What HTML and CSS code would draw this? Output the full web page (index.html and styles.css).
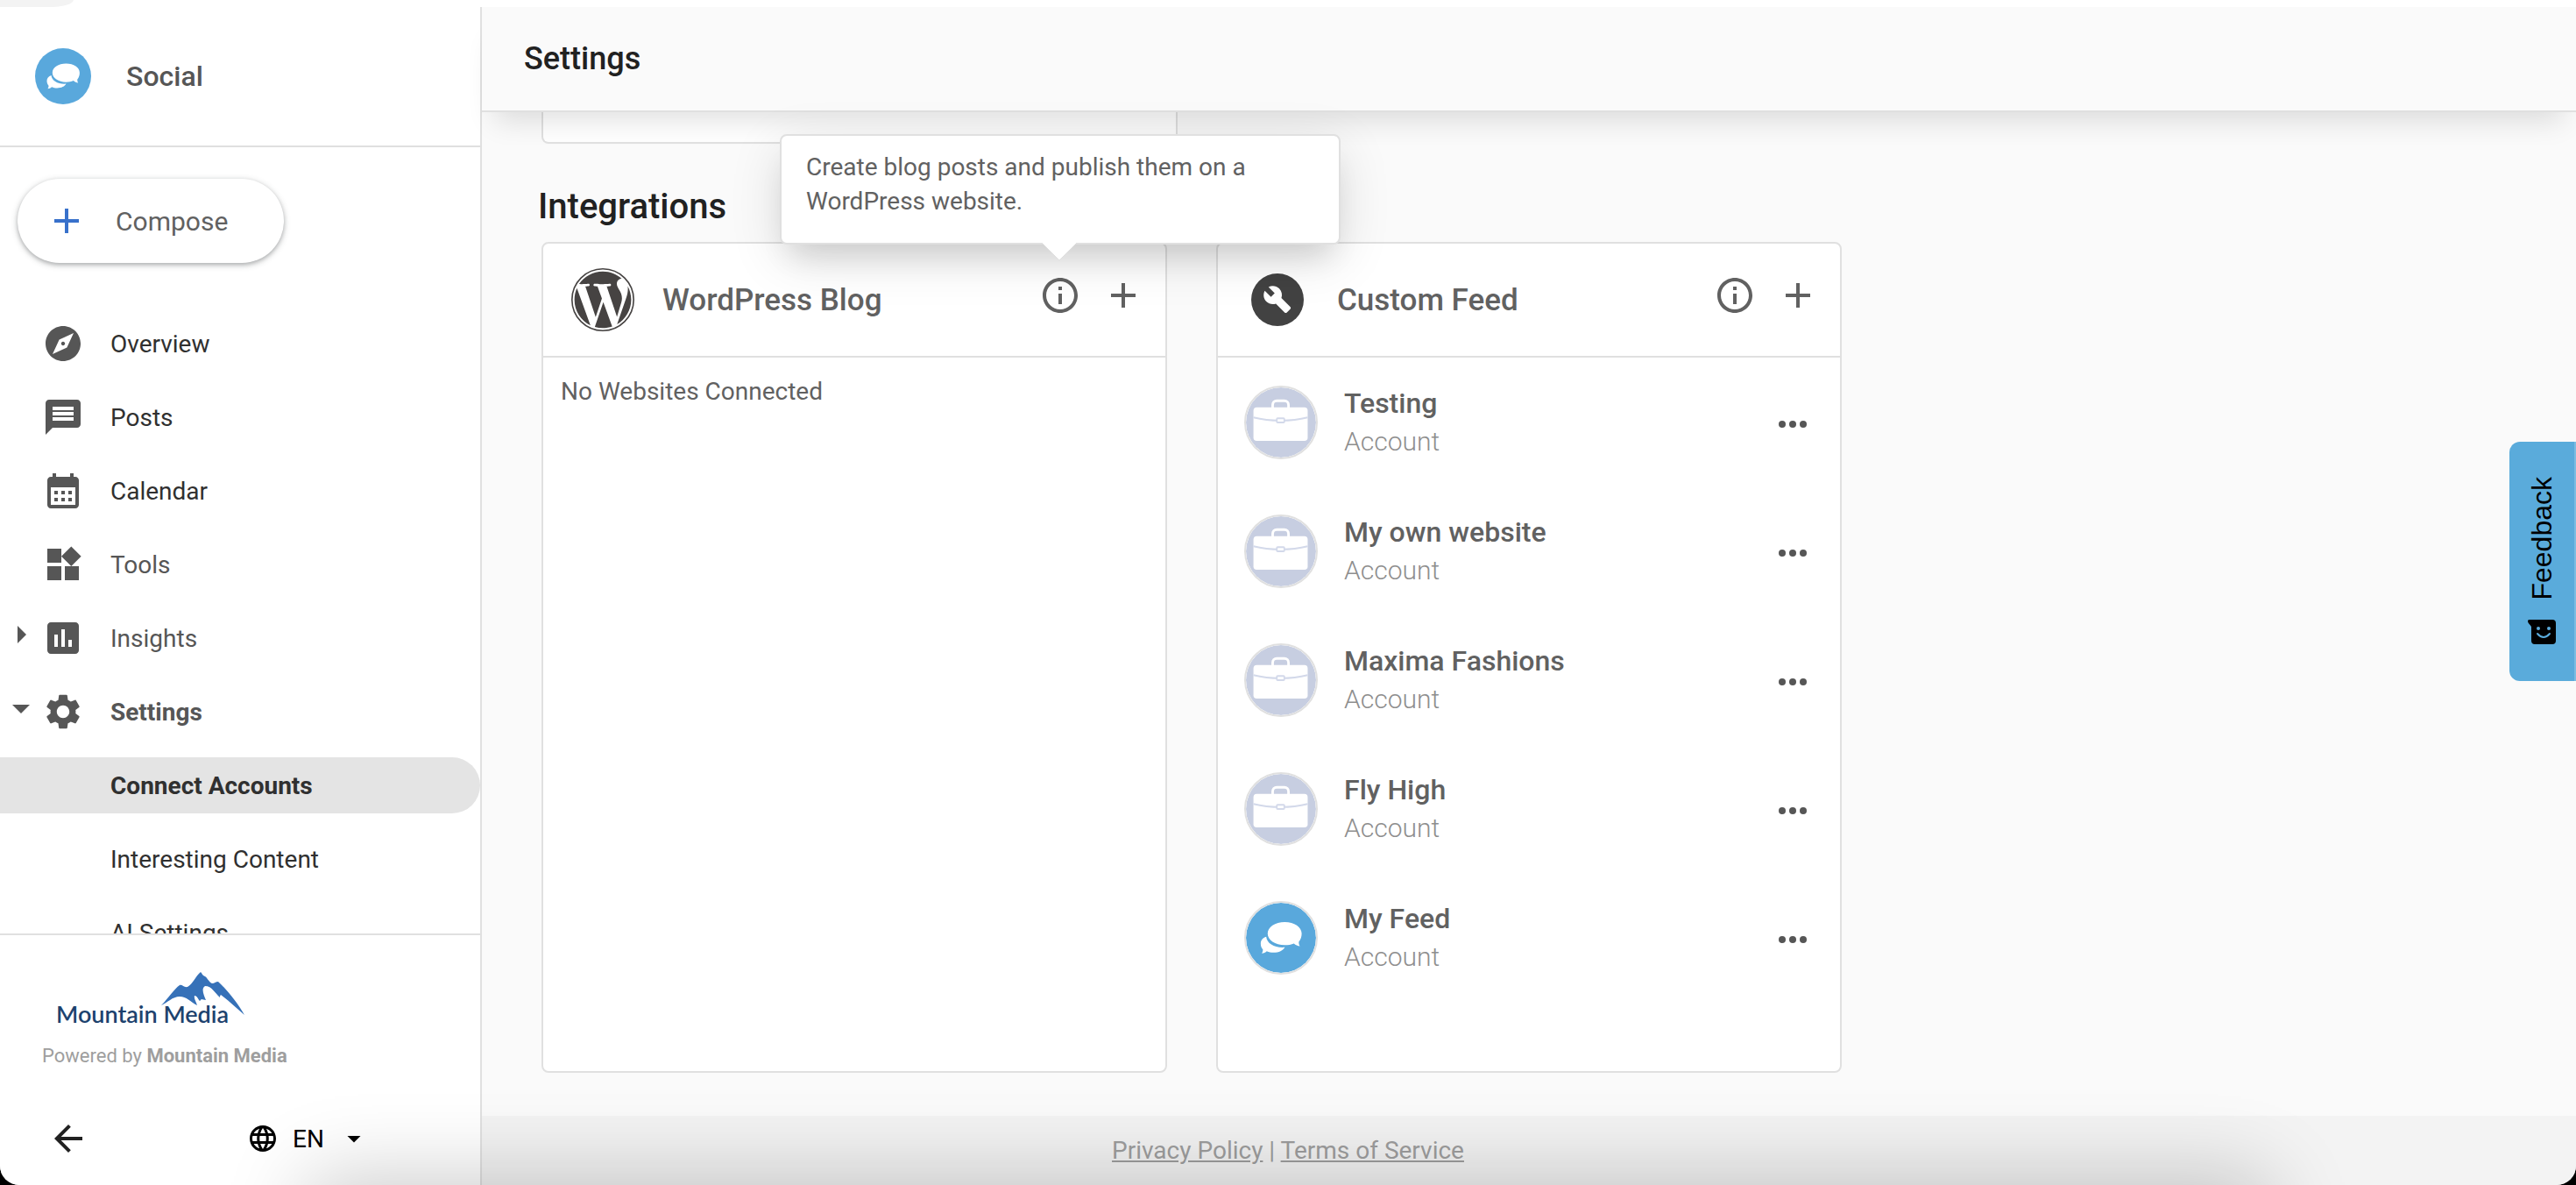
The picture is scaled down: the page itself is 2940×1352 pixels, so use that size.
FILE: index.html
```html
<!DOCTYPE html>
<html lang="en">
<head>
<meta charset="utf-8">
<title>Settings - Social</title>
<link rel="stylesheet" href="styles.css">
</head>
<body>
<svg class="sprite" aria-hidden="true">
  <symbol id="chats" viewBox="0 0 84 84">
    <circle cx="42" cy="42" r="42" fill="#59a8dc"/>
    <path d="M24.300 40.700C20 42 17.700 45 17.700 49c0 3 1 5.200 2.600 7 .1 2-.5 3.500-1.300 4.700 2.500-.2 4.500-1.200 6-2.700 2.500 1.200 5 1.700 8 1.700 6.500 0 11.500-2.400 13.700-6.400-12 1-21.400-4-22.400-12.600z" fill="#fff"/>
    <path d="M46.500 23C35 23 26 29 26 36.800s9 13.900 20.500 13.900c4 0 8-.7 11-2 2 1.800 4.500 3 7.200 3.300-1-1.500-1.500-3.200-1.300-5.300 2.200-2.700 3.400-6 3.400-9.900C66.800 29 58 23 46.500 23z" fill="#fff"/>
  </symbol>
  <symbol id="briefcase" viewBox="0 0 84 84">
    <circle cx="42" cy="42" r="42" fill="#c7cee1"/>
    <path d="M32 26v-5c0-3 2-5 5-5h9c3 0 5 2 5 5v5" fill="none" stroke="#fff" stroke-width="3"/>
    <rect x="9" y="24" width="65" height="40" rx="4" fill="#fff"/>
    <path d="M9 36c20 5 45 5 65 0" fill="none" stroke="#d3d9ea" stroke-width="2"/>
    <rect x="37" y="37" width="9" height="5" rx="1" fill="#fff" stroke="#d3d9ea" stroke-width="2"/>
  </symbol>
  <symbol id="info" viewBox="0 0 24 24"><path d="M11 7h2v2h-2zm0 4h2v6h-2zm1-9C6.48 2 2 6.48 2 12s4.480 10 10 10 10-4.480 10-10S17.520 2 12 2zm0 18c-4.410 0-8-3.590-8-8s3.590-8 8-8 8 3.590 8 8-3.590 8-8 8z"/></symbol>
  <symbol id="plus" viewBox="0 0 24 24"><path d="M19 13h-6v6h-2v-6H5v-2h6V5h2v6h6v2z"/></symbol>
  <symbol id="dots" viewBox="0 0 32 8"><circle cx="4" cy="4" r="4"/><circle cx="16" cy="4" r="4"/><circle cx="28" cy="4" r="4"/></symbol>
</svg>

<div class="tab-strip"><span class="tab-end"></span></div>
<div class="app">
  <aside class="sidebar">
    <div class="brand"><svg class="brand-icon"><use href="#chats"/></svg><span>Social</span></div>
    <div class="menu">
      <button class="compose"><svg class="icon"><use href="#plus"/></svg><span>Compose</span></button>
      <nav class="nav">
        <a href="#overview" class="nav-item dark"><svg class="icon" viewBox="0 0 24 24"><path d="M12 10.9c-.61 0-1.100.49-1.100 1.100s.49 1.100 1.100 1.100 1.100-.49 1.100-1.100-.49-1.100-1.100-1.100zM12 2C6.480 2 2 6.480 2 12s4.480 10 10 10 10-4.480 10-10S17.520 2 12 2zm2.190 12.190L6 18l3.810-8.190L18 6l-3.810 8.190z"/></svg>Overview</a>
        <a href="#posts" class="nav-item dark"><svg class="icon" viewBox="0 0 24 24"><path d="M20 2H4c-1.100 0-2 .9-2 2v18l4-4h14c1.100 0 2-.9 2-2V4c0-1.100-.9-2-2-2zM6 6h12v2H6zm12 8H6v-2h12zm0-3H6V9h12z"/></svg>Posts</a>
        <a href="#calendar" class="nav-item dark"><svg class="icon" viewBox="0 0 24 24"><path fill-rule="evenodd" d="M19 4h-1V2h-2v2H8V2H6v2H5c-1.100 0-2 .9-2 2v14c0 1.100.9 2 2 2h14c1.100 0 2-.9 2-2V6c0-1.100-.9-2-2-2zm0 16H5V10h14z"/><path d="M7 12h2v2H7zm4 0h2v2h-2zm4 0h2v2h-2zm-8 4h2v2H7zm4 0h2v2h-2zm4 0h2v2h-2z"/></svg>Calendar</a>
        <a href="#tools" class="nav-item"><svg class="icon" viewBox="0 0 24 24"><path d="M13 13v8h8v-8h-8zM3 21h8v-8H3v8zM3 3v8h8V3H3zm13.660-1.310L11 7.340 16.660 13l5.660-5.660-5.660-5.650z"/></svg>Tools</a>
        <a href="#insights" class="nav-item"><svg class="twisty" viewBox="0 0 10 20"><path d="M0 0l10 10L0 20z"/></svg><svg class="icon" viewBox="0 0 24 24"><path d="M19 3H5c-1.100 0-2 .9-2 2v14c0 1.100.9 2 2 2h14c1.100 0 2-.9 2-2V5c0-1.100-.9-2-2-2zM9 17H7v-7h2v7zm4 0h-2V7h2v10zm4 0h-2v-4h2v4z"/></svg>Insights</a>
        <a href="#settings" class="nav-item bold"><svg class="twisty down" viewBox="0 0 20 10"><path d="M0 0h20L10 10z"/></svg><svg class="icon" viewBox="0 0 24 24"><path d="M19.140 12.940c.04-.3.060-.61.060-.94 0-.32-.020-.64-.070-.94l2.030-1.580c.18-.14.230-.41.120-.61l-1.920-3.320c-.12-.22-.37-.29-.59-.22l-2.390.96c-.5-.38-1.030-.7-1.620-.94l-.36-2.540c-.04-.24-.24-.41-.48-.41h-3.840c-.24 0-.43.17-.47.41l-.36 2.540c-.59.24-1.130.57-1.620.94l-2.390-.96c-.22-.08-.47 0-.59.22L2.740 8.870c-.12.210-.08.470.12.610l2.030 1.580c-.05.3-.09.630-.09.940s.020.640.070.940l-2.030 1.580c-.18.140-.23.410-.12.610l1.920 3.320c.12.220.37.290.59.220l2.390-.96c.5.380 1.030.7 1.620.94l.36 2.540c.05.240.24.410.48.410h3.840c.24 0 .44-.17.47-.41l.36-2.540c.59-.24 1.130-.56 1.620-.94l2.390.96c.22.080.47 0 .59-.22l1.920-3.320c.12-.22.070-.47-.12-.61l-2.010-1.580zM12 15.600c-1.980 0-3.600-1.620-3.600-3.600s1.620-3.600 3.600-3.600 3.600 1.620 3.600 3.600-1.620 3.600-3.600 3.600z"/></svg>Settings</a>
        <a href="#connect" class="nav-item sub active dark bold">Connect Accounts</a>
        <a href="#content" class="nav-item sub dark">Interesting Content</a>
        <a href="#ai" class="nav-item sub dark">AI Settings</a>
      </nav>
    </div>
    <div class="side-foot">
      <svg class="logo" viewBox="0 0 220 72" role="img" aria-label="Mountain Media">
        <path d="M120 42c8-8 15-19 21-23 3-1 5 3 9 2 6-3 9-12 15-17 2 2 2 4 5 5 3 2 4 6 8 8 3 0 4-2 7-2 9 8 22 24 30 38-9-8-18-16-27-23-1 1-1 2-1 3-6-5-9-13-17-13-5 3-1 11 1 16-2 0-4-1-5-1-1 1-1 1-2 2-2-2-3-6-6-6-1 4 2 7 3 11-8-4-12-10-20-10-8 0-14 7-21 10z" fill="#3671b8"/>
        <text x="0" y="62" class="logo-text" fill="#1d426e">Mountain Media</text>
      </svg>
      <p class="powered">Powered by <b>Mountain Media</b></p>
      <div class="foot-row">
        <button class="plain" aria-label="Back"><svg class="icon" viewBox="0 0 24 24"><path d="M20 11H7.830l5.590-5.590L12 4l-8 8 8 8 1.410-1.410L7.830 13H20v-2z"/></svg></button>
        <button class="plain lang"><svg class="icon-sm" viewBox="0 0 24 24"><path d="M11.990 2C6.470 2 2 6.480 2 12s4.470 10 9.990 10C17.520 22 22 17.520 22 12S17.520 2 11.990 2zm6.930 6h-2.950c-.32-1.250-.78-2.450-1.380-3.560 1.840.63 3.370 1.910 4.330 3.560zM12 4.040c.83 1.200 1.480 2.530 1.910 3.960h-3.820c.43-1.430 1.080-2.760 1.910-3.960zM4.260 14C4.100 13.360 4 12.690 4 12s.1-1.360.26-2h3.380c-.08.660-.14 1.320-.14 2s.06 1.340.14 2H4.260zm.82 2h2.950c.32 1.250.78 2.450 1.380 3.560-1.840-.63-3.370-1.900-4.330-3.560zm2.950-8H5.080c.96-1.660 2.490-2.930 4.330-3.560C8.810 5.550 8.350 6.750 8.030 8zM12 19.960c-.83-1.200-1.480-2.530-1.910-3.960h3.820c-.43 1.430-1.080 2.760-1.910 3.960zM14.340 14H9.660c-.09-.66-.16-1.320-.16-2s.07-1.350.16-2h4.680c.09.650.16 1.320.16 2s-.07 1.340-.16 2zm.25 5.560c.6-1.110 1.060-2.310 1.380-3.560h2.950c-.96 1.650-2.490 2.930-4.330 3.560zM16.360 14c.08-.66.14-1.320.14-2s-.06-1.340-.14-2h3.380c.16.640.26 1.310.26 2s-.1 1.360-.26 2h-3.380z"/></svg><span>EN</span><svg class="icon-sm" viewBox="0 0 24 24"><path d="M7 10l5 5 5-5z"/></svg></button>
      </div>
    </div>
  </aside>

  <div class="page">
    <header class="topbar"><h1>Settings</h1></header>
    <main class="content">
      <section class="card-stub"></section>
      <h2>Integrations</h2>
      <div class="cards">
        <section class="card">
          <header class="card-head">
            <svg class="card-logo" viewBox="0 0 24 24" fill="#464342"><circle cx="12" cy="12" r="11.73" fill="none" stroke="#464342" stroke-width=".54"/><path d="M21.469 6.825c.84 1.537 1.318 3.3 1.318 5.175 0 3.979-2.156 7.456-5.363 9.325l3.295-9.527c.615-1.540.82-2.771.82-3.864 0-.405-.026-.78-.07-1.110m-7.981.105c.647-.03 1.232-.105 1.232-.105.582-.075.514-.93-.067-.899 0 0-1.755.135-2.880.135-1.064 0-2.850-.15-2.850-.15-.585-.03-.661.855-.075.885 0 0 .54.061 1.125.09l1.680 4.605-2.370 7.080L5.354 6.900c.649-.03 1.234-.1 1.234-.1.585-.075.516-.93-.065-.896 0 0-1.746.138-2.874.138-.2 0-.438-.008-.69-.015C4.911 3.150 8.235 1.215 12 1.215c2.809 0 5.365 1.072 7.286 2.833-.046-.003-.091-.009-.141-.009-1.060 0-1.812.923-1.812 1.914 0 .89.513 1.643 1.060 2.531.411.72.89 1.643.89 2.977 0 .915-.354 1.994-.821 3.479l-1.075 3.585-3.900-11.610.001.014zM12 22.784c-1.059 0-2.081-.153-3.048-.437l3.237-9.406 3.315 9.087c.024.053.05.101.078.149-1.120.393-2.325.609-3.582.609M1.211 12c0-1.564.336-3.050.935-4.390L7.290 21.709C3.694 19.960 1.212 16.271 1.211 12"/></svg>
            <h3>WordPress Blog</h3>
            <div class="actions">
              <button class="plain" aria-label="About WordPress Blog" aria-describedby="tip"><svg class="icon"><use href="#info"/></svg></button>
              <button class="plain" aria-label="Add website"><svg class="icon"><use href="#plus"/></svg></button>
            </div>
            <div class="tooltip" id="tip" role="tooltip">Create blog posts and publish them on a WordPress website.<svg class="tip-arrow" viewBox="0 0 40 21"><path d="M0 0h40L20 20z" fill="#fff"/><path d="M0 0l20 20L40 0" fill="none" stroke="#e0e0e0"/></svg></div>
          </header>
          <p class="empty">No Websites Connected</p>
        </section>
        <section class="card">
          <header class="card-head">
            <svg class="card-logo" viewBox="0 0 24 24"><circle cx="12" cy="12" r="10" fill="#424242"/><path d="M16.900 15.490l-1.400 1.400c-.2.2-.51.2-.71 0l-3.410-3.410c-1.220.43-2.640.17-3.620-.81-1.110-1.110-1.300-2.790-.59-4.100l2.350 2.350 1.410-1.410-2.350-2.350c1.320-.71 2.990-.52 4.100.59.980.98 1.240 2.400.81 3.620l3.410 3.410c.19.190.19.510 0 .71z" fill="#fff"/></svg>
            <h3>Custom Feed</h3>
            <div class="actions">
              <button class="plain" aria-label="About Custom Feed"><svg class="icon"><use href="#info"/></svg></button>
              <button class="plain" aria-label="Add feed"><svg class="icon"><use href="#plus"/></svg></button>
            </div>
          </header>
          <ul class="accounts">
            <li><svg class="avatar"><use href="#briefcase"/></svg><div class="who"><strong>Testing</strong><span>Account</span></div><button class="plain more" aria-label="More"><svg><use href="#dots"/></svg></button></li>
            <li><svg class="avatar"><use href="#briefcase"/></svg><div class="who"><strong>My own website</strong><span>Account</span></div><button class="plain more" aria-label="More"><svg><use href="#dots"/></svg></button></li>
            <li><svg class="avatar"><use href="#briefcase"/></svg><div class="who"><strong>Maxima Fashions</strong><span>Account</span></div><button class="plain more" aria-label="More"><svg><use href="#dots"/></svg></button></li>
            <li><svg class="avatar"><use href="#briefcase"/></svg><div class="who"><strong>Fly High</strong><span>Account</span></div><button class="plain more" aria-label="More"><svg><use href="#dots"/></svg></button></li>
            <li><svg class="avatar"><use href="#chats"/></svg><div class="who"><strong>My Feed</strong><span>Account</span></div><button class="plain more" aria-label="More"><svg><use href="#dots"/></svg></button></li>
          </ul>
        </section>
      </div>
    </main>
    <footer class="footer"><a href="#privacy">Privacy Policy</a> | <a href="#terms">Terms of Service</a></footer>
  </div>
  <div class="floor-shadow"></div>
</div>
<button class="feedback"><span>Feedback</span><svg viewBox="0 0 32 28"><path d="M0 2c0-2 1-2 3-2h25q4 0 4 4v20q0 4-4 4H8q-4 0-4-4V8C3 6 0 4 0 2z"/><circle cx="12" cy="10" r="2" fill="#5aabdb"/><circle cx="24" cy="10" r="2" fill="#5aabdb"/><path d="M11 16q7 8 14 0" fill="none" stroke="#5aabdb" stroke-width="2" stroke-linecap="round"/></svg></button>
</body>
</html>
```
FILE: styles.css
```css
* { box-sizing: border-box; }
body {
  margin: 0;
  height: 100vh;
  display: flex;
  flex-direction: column;
  overflow: hidden;
  background: #000;
  color: #616161;
  font-family: Roboto, "Liberation Sans", sans-serif;
  font-size: 30px;
}
h1, h2, h3, p, ul { margin: 0; padding: 0; }
h1, h2, h3 { font-weight: 500; }
a { color: inherit; text-decoration: none; }
button { font: inherit; color: inherit; cursor: pointer; }
.sprite { position: absolute; width: 0; height: 0; }
.plain { display: flex; align-items: center; padding: 0; border: 0; background: none; }
.icon { width: 48px; height: 48px; flex: none; fill: currentColor; }
.icon-sm { width: 36px; height: 36px; fill: currentColor; }

.tab-strip { height: 8px; flex: none; display: flex; background: #fff; }
.tab-end { width: 84px; background: #f3f3f3; border-bottom-right-radius: 28px 8px; }
.app {
  position: relative;
  flex: 1;
  min-height: 0;
  display: flex;
  overflow: hidden;
  background: #fafafa;
  border-radius: 0 0 22px 22px;
}

.sidebar {
  width: 550px;
  flex: none;
  display: flex;
  flex-direction: column;
  background: #fff;
  border-right: 2px solid #e0e0e0;
}
.brand {
  height: 160px;
  flex: none;
  display: flex;
  align-items: center;
  gap: 40px;
  padding: 0 40px;
  border-bottom: 2px solid #e0e0e0;
  color: #565656;
  font-size: 32px;
  font-weight: 500;
}
.brand-icon { width: 64px; height: 64px; }
.menu { flex: 1; min-height: 0; overflow: hidden; padding-top: 36px; }
.compose {
  display: flex;
  align-items: center;
  gap: 32px;
  width: 304px;
  height: 96px;
  margin-left: 20px;
  padding: 0 32px;
  border: 0;
  border-radius: 48px;
  background: #fff;
  box-shadow: 0 2px 4px rgba(60, 64, 67, .3), 0 2px 6px 2px rgba(60, 64, 67, .15);
}
.compose .icon { color: #3871cb; }
.nav { display: flex; flex-direction: column; gap: 20px; padding-top: 60px; }
.nav-item {
  position: relative;
  display: flex;
  align-items: center;
  gap: 30px;
  height: 64px;
  flex: none;
  padding-left: 48px;
  color: #565656;
  font-size: 28px;
}
.nav-item .icon { color: #565656; }
.nav-item.dark { color: #303030; }
.bold { font-weight: 700; }
.nav-item.sub { padding-left: 126px; }
.active { background: #e4e4e4; border-radius: 0 32px 32px 0; }
.twisty { position: absolute; left: 20px; top: 16px; width: 10px; height: 24px; fill: #565656; }
.twisty.down { left: 14px; top: 22px; width: 20px; height: 14px; }
.side-foot { flex: none; border-top: 2px solid #e0e0e0; padding: 38px 48px 29px; }
.logo { display: block; width: 220px; height: 72px; margin-left: 16px; }
.logo-text { font: 600 27px Lato, sans-serif; }
.powered { margin-top: 10px; font-size: 22px; line-height: 36px; color: #9e9e9e; }
.foot-row { display: flex; align-items: center; gap: 180px; margin-top: 52px; padding-left: 6px; color: #212121; }
.lang { gap: 16px; color: #000; font-size: 28px; }

.page { flex: 1; min-width: 0; display: flex; flex-direction: column; }
.topbar {
  position: relative;
  z-index: 1;
  height: 120px;
  flex: none;
  display: flex;
  align-items: center;
  padding: 0 48px;
  background: #fafafa;
  border-bottom: 2px solid #e0e0e0;
  color: #212121;
  box-shadow: 0 24px 32px -14px rgba(0, 0, 0, .12);
}
h1 { font-size: 36px; }
.content { flex: 1; padding: 0 68px; }
.card-stub { width: 726px; height: 36px; background: #fff; border: 2px solid #e0e0e0; border-top: 0; border-radius: 0 0 8px 8px; }
h2 { margin: 48px -4px 16px; color: #212121; font-size: 40px; line-height: 48px; }
.cards { display: flex; gap: 56px; }
.card { width: 714px; height: 948px; background: #fff; border: 2px solid #e0e0e0; border-radius: 8px; }
.card-head { position: relative; display: flex; align-items: center; height: 130px; padding: 0 24px 0 32px; border-bottom: 2px solid #e0e0e0; }
.card-logo { width: 72px; height: 72px; margin-right: 32px; }
h3 { font-size: 35px; }
.actions { display: flex; gap: 24px; margin-left: auto; padding-bottom: 10px; }
.empty { padding: 21px 20px; line-height: 36px; font-size: 28px; }
.accounts { display: flex; flex-direction: column; gap: 63px; padding: 32px 38px 0 30px; list-style: none; }
.accounts li { display: flex; align-items: center; height: 84px; }
.avatar { width: 84px; height: 84px; margin-right: 30px; border: 2px solid #e0e0e0; border-radius: 50%; }
.who { display: flex; flex-direction: column; }
.who strong { font-size: 32px; line-height: 44px; font-weight: 500; }
.who span { font-size: 30px; line-height: 44px; font-weight: 300; color: #8e8e8e; }
.more { margin-left: auto; padding-top: 4px; }
.more svg { width: 32px; height: 8px; fill: #565656; }

.tooltip {
  position: absolute;
  z-index: 2;
  right: -200px;
  bottom: 127px;
  width: 640px;
  height: 126px;
  padding: 16px 28px;
  background: #fff;
  border: 2px solid #e0e0e0;
  border-radius: 8px;
  line-height: 39px;
  font-size: 28px;
  box-shadow: 0 16px 60px rgba(0, 0, 0, .12), 0 24px 32px -12px rgba(0, 0, 0, .12);
}
.tip-arrow { position: absolute; left: 297px; top: 122px; width: 40px; height: 21px; }

.footer { height: 79px; flex: none; padding: 20px 550px 0 0; background: #f3f3f3; color: #9e9e9e; font-size: 28px; line-height: 40px; text-align: center; }
.footer a { text-decoration: underline; }
.floor-shadow { position: absolute; z-index: 3; left: 360px; right: 360px; top: 100%; height: 300px; box-shadow: 0 0 90px 10px rgba(0, 0, 0, .2); pointer-events: none; }

.feedback {
  position: absolute;
  z-index: 4;
  right: 0;
  top: 504px;
  display: flex;
  flex-direction: column;
  align-items: center;
  gap: 22px;
  width: 76px;
  height: 273px;
  padding: 40px 0 0;
  border: 0;
  border-right: 2px solid #7bbce2;
  border-radius: 12px 0 0 12px;
  background: #5aabdb;
  color: #000;
  font: 32px "Liberation Sans", Arial, sans-serif;
}
.feedback span { writing-mode: vertical-rl; transform: rotate(180deg); }
.feedback svg { width: 32px; height: 28px; }
```
